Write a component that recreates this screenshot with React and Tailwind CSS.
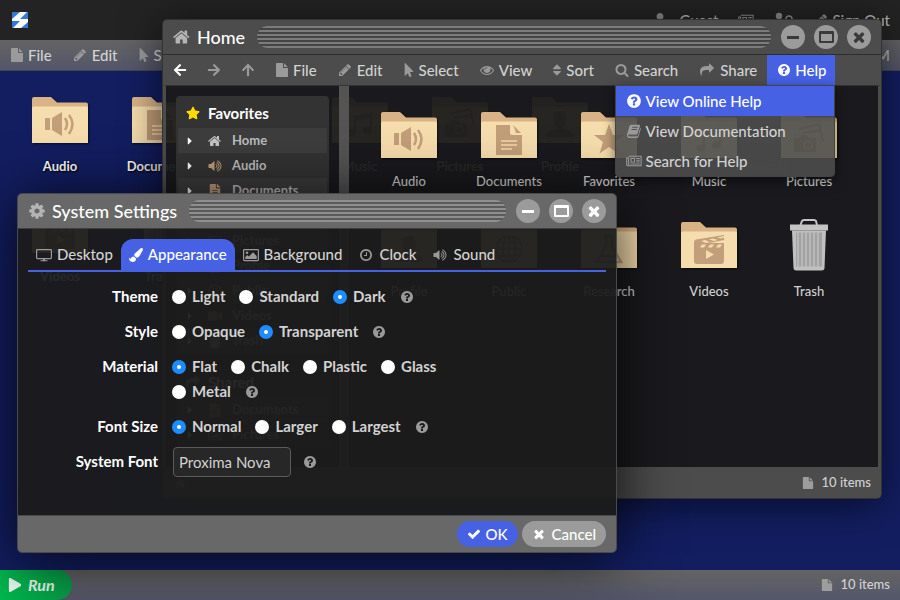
import React from "react";
import {
  FaArrowLeft,
  FaArrowRight,
  FaArrowUp,
  FaCaretRight,
  FaMousePointer,
  FaMusic,
  FaPaintBrush,
  FaPlay,
  FaRegImage,
  FaSort,
  FaStar,
  FaTrash,
  FaUser,
  FaVideo,
  FaBullseye,
  FaFileAlt,
} from "react-icons/fa";

const glyph = (d) =>
  function Glyph({ className }) {
    return (
      <svg viewBox="0 0 1792 1792" fill="currentColor" className={className} aria-hidden="true">
        <path d={d} />
      </svg>
    );
  };

const Home = glyph(
  "M1408 992v480q0 26-19 45t-45 19h-384v-384h-256v384h-384q-26 0-45-19t-19-45v-480q0-1 .5-3t.5-3l575-474 575 474q1 2 1 6zm223-69l-62 74q-8 9-21 11h-3q-13 0-21-7l-692-577-692 577q-12 8-24 7-13-2-21-11l-62-74q-8-10-7-23.5t11-21.5l719-599q32-26 76-26t76 26l244 204v-195q0-14 9-23t23-9h192q14 0 23 9t9 23v408l219 182q10 8 11 21.5t-7 23.5z"
);
const Question = glyph(
  "M1024 1376v-192q0-14-9-23t-23-9h-192q-14 0-23 9t-9 23v192q0 14 9 23t23 9h192q14 0 23-9t9-23zm256-672q0-88-55.5-163t-138.5-116-170-41q-243 0-371 213-15 24 8 42l132 100q7 6 19 6 16 0 25-12 53-68 86-92 34-24 86-24 48 0 85.5 26t37.5 59q0 38-20 61t-68 45q-63 28-115.5 86.5t-52.5 125.5v36q0 14 9 23t23 9h192q14 0 23-9t9-23q0-19 21.5-49.5t54.5-49.5q32-18 49-28.5t46-35 44.5-48 28-60.5 12.5-81zm384 192q0 209-103 385.5t-279.5 279.5-385.5 103-385.5-103-279.5-279.5-103-385.5 103-385.5 279.5-279.5 385.5-103 385.5 103 279.5 279.5 103 385.5z"
);
const Pencil = glyph(
  "M491 1536l91-91-235-235-91 91v107h128v128h107zm523-928q0-22-22-22-10 0-17 7l-542 542q-7 7-7 17 0 22 22 22 10 0 17-7l542-542q7-7 7-17zm-54-192l416 416-832 832h-416v-416zm683 96q0 53-37 90l-166 166-416-416 166-165q36-38 90-38 53 0 91 38l235 234q37 39 37 91z"
);
const File = glyph(
  "M1152 512v-472q22 14 36 28l408 408q14 14 28 36h-472zm-128 32q0 40 28 68t68 28h544v1056q0 40-28 68t-68 28h-1344q-40 0-68-28t-28-68v-1600q0-40 28-68t68-28h800v544z"
);
const Eye = glyph(
  "M1664 960q-152-236-381-353 61 104 61 225 0 185-131.5 316.5t-316.5 131.5-316.5-131.5-131.5-316.5q0-121 61-225-229 117-381 353 133 205 333.5 326.5t434.5 121.5 434.5-121.5 333.5-326.5zm-720-384q0-20-14-34t-34-14q-125 0-214.5 89.5t-89.5 214.5q0 20 14 34t34 14 34-14 14-34q0-86 61-147t147-61q20 0 34-14t14-34zm848 384q0 34-20 69-140 230-376.5 368.5t-499.5 138.5-499.5-139-376.5-368q-20-35-20-69t20-69q140-229 376.5-368t499.5-139 499.5 139 376.5 368q20 35 20 69z"
);
const Cog = glyph(
  "M1152 896q0-106-75-181t-181-75-181 75-75 181 75 181 181 75 181-75 75-181zm512-109v222q0 12-8 23t-20 13l-185 28q-19 54-39 91 35 50 107 138 10 12 10 25t-9 23q-27 37-99 108t-94 71q-12 0-26-9l-138-108q-44 23-91 38-16 136-29 186-7 28-36 28h-222q-14 0-24.5-8.5t-11.5-21.5l-28-184q-49-16-90-37l-141 107q-10 9-25 9-14 0-25-11-126-114-165-168-7-10-7-23 0-12 8-23 15-21 51-66.5t54-70.5q-27-50-41-99l-183-27q-13-2-21-12.5t-8-23.5v-222q0-12 8-23t19-13l186-28q14-46 39-92-40-57-107-138-10-12-10-24 0-10 9-23 26-36 98.5-107.5t94.5-71.5q13 0 26 10l138 107q44-23 91-38 16-136 29-186 7-28 36-28h222q14 0 24.5 8.5t11.5 21.5l28 184q49 16 90 37l142-107q9-9 24-9 13 0 25 10 129 119 165 170 7 8 7 22 0 12-8 23-15 21-51 66.5t-54 70.5q26 50 41 98l183 28q13 2 21 12.5t8 23.5z"
);
const Volume = glyph(
  "M832 352v1088q0 26-19 45t-45 19-45-19l-333-333h-262q-26 0-45-19t-19-45v-384q0-26 19-45t45-19h262l333-333q19-19 45-19t45 19 19 45zm384 544q0 76-42.5 141.5t-112.5 93.5q-10 5-25 5-26 0-45-18.5t-19-45.5q0-21 12-35.5t29-25 34-23 29-36 12-56.5-12-56.5-29-36-34-23-29-25-12-35.5q0-27 19-45.5t45-18.5q15 0 25 5 70 27 112.5 93t42.5 142zm256 0q0 153-85 282.5t-225 188.5q-13 5-25 5-27 0-46-19t-19-45q0-39 39-59 56-29 76-44 74-54 115.5-135.5t41.5-173.5-41.5-173.5-115.5-135.5q-20-15-76-44-39-20-39-59 0-26 19-45t45-19q13 0 26 5 140 59 225 188.5t85 282.5zm256 0q0 230-127 422.5t-338 283.5q-13 5-26 5-26 0-45-19t-19-45q0-36 39-59 7-4 22.5-10.5t22.5-10.5q46-25 82-51 123-91 192-227t69-289-69-289-192-227q-36-26-82-51-7-4-22.5-10.5t-22.5-10.5q-39-23-39-59 0-26 19-45t45-19q13 0 26 5 211 91 338 283.5t127 422.5z"
);
const Times = glyph(
  "M1490 1322q0 40-28 68l-136 136q-28 28-68 28t-68-28l-294-294-294 294q-28 28-68 28t-68-28l-136-136q-28-28-28-68t28-68l294-294-294-294q-28-28-28-68t28-68l136-136q28-28 68-28t68 28l294 294 294-294q28-28 68-28t68 28l136 136q28 28 28 68t-28 68l-294 294 294 294q28 28 28 68z"
);
const Check = glyph(
  "M1671 566q0 40-28 68l-724 724-136 136q-28 28-68 28t-68-28l-136-136-362-362q-28-28-28-68t28-68l136-136q28-28 68-28t68 28l294 295 656-657q28-28 68-28t68 28l136 136q28 28 28 68z"
);
const Search = glyph(
  "M1216 832q0-185-131.5-316.5t-316.5-131.5-316.5 131.5-131.5 316.5 131.5 316.5 316.5 131.5 316.5-131.5 131.5-316.5zm512 832q0 52-38 90t-90 38q-54 0-90-38l-343-342q-179 124-399 124-143 0-273.5-55.5t-225-150-150-225-55.5-273.5 55.5-273.5 150-225 225-150 273.5-55.5 273.5 55.5 225 150 150 225 55.5 273.5q0 220-124 399l343 343q37 37 37 90z"
);
const Share = glyph(
  "M1792 640q0 26-19 45l-512 512q-19 19-45 19t-45-19-19-45v-256h-224q-98 0-175.5 6t-154 21.5-133 42.5-105.5 69.5-80 101-48.5 138.5-17.5 181q0 55 5 123 0 6 2.5 23.5t2.5 26.5q0 15-8.5 25t-23.5 10q-16 0-28-17-7-9-13-22t-13.5-30-10.5-24q-127-285-127-451 0-199 53-333 162-403 875-403h224v-256q0-26 19-45t45-19 45 19l512 512q19 19 19 45z"
);
const Clock = glyph(
  "M1024 544v448q0 14-9 23t-23 9h-320q-14 0-23-9t-9-23v-64q0-14 9-23t23-9h224v-352q0-14 9-23t23-9h64q14 0 23 9t9 23zm416 352q0-148-73-273t-198-198-273-73-273 73-198 198-73 273 73 273 198 198 273 73 273-73 198-198 73-273zm224 0q0 209-103 385.5t-279.5 279.5-385.5 103-385.5-103-279.5-279.5-103-385.5 103-385.5 279.5-279.5 385.5-103 385.5 103 279.5 279.5 103 385.5z"
);

function Newspaper({ className }) {
  return (
    <svg viewBox="0 0 18 14" fill="none" stroke="currentColor" strokeWidth="1.2" className={className} aria-hidden="true">
      <path d="M3 1.6h14v10.8H2.4A1.6 1.6 0 0 1 .8 10.800V3.600H3v7.200a.8.8 0 0 1-1 1.400" />
      <path d="M5.600 4.200h4v4h-4zM11.500 4.200h4M11.500 6.200h4M11.500 8.200h4M5 10.300h10.500" />
    </svg>
  );
}

function Book({ className }) {
  return (
    <svg viewBox="0 0 16 14" className={className} aria-hidden="true">
      <path d="M5 .8h8.300q1 0 .7 1L11.500 9.500q-.3 1-1.300 1H3q-1 0-.9 1t1.100 1h7.600q.8 0 1-.8l2.400-8q.8.6.5 1.500l-2.300 7.600q-.3 1.200-1.500 1.200H2.800Q.6 12.800 1 10.500l2.400-8.200Q3.800.8 5 .8z" fill="currentColor" />
      <path d="M6.200 3.300h5.500M5.500 5.500H11" stroke="#4c4c4c" strokeWidth="0.900" />
    </svg>
  );
}

function People({ className }) {
  return (
    <svg viewBox="0 0 20 16" className={className} aria-hidden="true">
      <circle cx="5" cy="4" r="3.200" fill="currentColor" />
      <path d="M0 15q0-6 5-6t5 6z" fill="currentColor" />
      <circle cx="15" cy="7" r="3" fill="none" stroke="currentColor" strokeWidth="1.500" />
      <path d="M11 15q0-3 4-3t4 3" fill="none" stroke="currentColor" strokeWidth="1.500" />
    </svg>
  );
}

function Monitor({ className }) {
  return (
    <svg viewBox="0 0 16 14" className={className} aria-hidden="true">
      <rect x="0.600" y="1.600" width="14.800" height="9" rx="0.800" fill="none" stroke="currentColor" strokeWidth="1.200" />
      <path d="M7 10.600h2v1.600h2.500v1h-7v-1H7z" fill="currentColor" />
    </svg>
  );
}

function Picture({ className }) {
  return (
    <svg viewBox="0 0 16 14" className={className} aria-hidden="true">
      <rect x="0.600" y="1.600" width="14.800" height="11" rx="0.800" fill="none" stroke="currentColor" strokeWidth="1.200" />
      <circle cx="4" cy="4.800" r="1.300" fill="currentColor" />
      <path d="M2.300 11V9l2-2 1.500 1.500L10 4.300l3.700 3.700v3z" fill="currentColor" />
    </svg>
  );
}

const emblems = {
  Audio: (
    <>
      <path d="M13 21h5v12h-5zM20 21l10-6v24l-10-6z" />
      <path d="M33 21q4 6 0 12M37 18q7 9 0 19" fill="none" stroke="#c39e7a" strokeWidth="2.500" />
    </>
  ),
  Documents: (
    <>
      <path d="M15 13h14v8q0 2 2 2h10v20H15z" />
      <path d="M32 13l8 8h-5q-1-4-3-8z" />
      <path d="M20 29h16M20 33h16M20 37h11" stroke="#f5dcac" strokeWidth="1.500" />
    </>
  ),
  Favorites: <path d="M28 12l4 11h11l-9 7 3.500 11.500L28 35l-9.500 6.500L22 30l-9-7h11z" />,
  Music: (
    <>
      <path d="M22 19l18-4v5l-16 4v12h-2zM38 17h2v16h-2z" />
      <ellipse cx="19.500" cy="36" rx="4.500" ry="3.800" />
      <ellipse cx="35.500" cy="33" rx="4.500" ry="3.800" />
    </>
  ),
  Pictures: (
    <>
      <path d="M18 17l20-5 4 17M22 21l18-3" fill="none" stroke="#c39e7a" strokeWidth="2" />
      <path d="M13 26h5l2-3h6l2 3h7v14H13z" />
      <circle cx="27" cy="33" r="4" fill="none" stroke="#f5dcac" strokeWidth="1.500" />
    </>
  ),
  Profile: <path d="M28 14c9 0 8 14 3 16v2c6 1 11 3 11 8H14c0-5 5-7 11-8v-2c-5-2-6-16 3-16z" />,
  Public: (
    <g fill="none" stroke="#c39e7a" strokeWidth="1.500">
      <circle cx="28" cy="27" r="13" />
      <ellipse cx="28" cy="27" rx="6" ry="13" />
      <path d="M15 27h26M28 14v26M17 20h22M17 34h22" />
    </g>
  ),
  Research: (
    <path d="M23 14h10M25 14v10l-9 16h24l-9-16V14M20 34h16" fill="none" stroke="#c39e7a" strokeWidth="2.500" />
  ),
  Videos: (
    <>
      <path d="M13 20q0-2 2-2.500L43 13v5l-15 3h15v18q0 3-3 3H16q-3 0-3-3z" />
      <path d="M20 19l5 2 4-1-5-2zM28 17.500l5 1.500 4-1-5-1.500zM36 15.500l4 1 3-1v-1.500zM21 22.500h4l-2 3h-4zM29 22.500h4l-2 3h-4zM37 22.500h4l-2 3h-4zM25 28l8 4.500-8 4.500z" fill="#f5dcac" />
    </>
  ),
};

function FolderArt({ name }) {
  return (
    <svg viewBox="0 0 56 46" className="h-[46px] w-14 drop-shadow-[1px_1px_1px_rgba(0,0,0,0.6)]" aria-hidden="true">
      <path d="M0 2q0-2 2-2h17l6 5.500h29q2 0 2 2V20H0z" fill="#d9b386" />
      <path d="M0 11q0-1.500 1.500-1.500h53q1.500 0 1.500 1.500v35H0z" fill="#f6ddad" />
      <g fill="#c39e7a">{emblems[name]}</g>
    </svg>
  );
}

function TrashArt() {
  return (
    <svg viewBox="0 0 38 52" className="h-[52px] w-[38px] shrink-0" aria-hidden="true">
      <path d="M10.500 6l1.500-4q.5-1 2-1h10q1.500 0 2 1l1 4" fill="none" stroke="#c4c4c4" strokeWidth="2" />
      <path d="M0 5.500h38v6H0z" fill="#c4c4c4" />
      <path d="M2 11.500h34L34.500 49q-.2 2.500-3 2.500h-25q-2.800 0-3-2.500z" fill="#c0c0c0" />
      <path d="M6 13.500h26v34H6z" fill="#a2a2a2" />
      <path d="M8 13v35M12 13v35M16 13v35M20 13v35M24 13v35M28 13v35" stroke="#c4c4c4" strokeWidth="1.300" />
    </svg>
  );
}

const folders = ["Audio", "Documents", "Favorites", "Music", "Pictures", "Profile", "Public", "Research", "Videos", "Trash"];

function IconGrid({ labelClass }) {
  return (
    <div className="flex flex-wrap content-start p-2.5">
      {folders.map((name) => (
        <button key={name} type="button" className="flex h-[110px] w-[100px] flex-col items-center gap-3.5 pt-4">
          <span className="flex h-[46px] items-center">
            {name === "Trash" ? <TrashArt /> : <FolderArt name={name} />}
          </span>
          <span className={labelClass}>{name}</span>
        </button>
      ))}
    </div>
  );
}

const menuItems = [
  ["File", File, "w-3.5"],
  ["Edit", Pencil, "w-4"],
  ["Select", FaMousePointer, "w-3"],
  ["View", Eye, "w-4"],
  ["Sort", FaSort, "w-2.5"],
  ["Search", Search, "w-4"],
  ["Share", Share, "w-[18px]"],
];

function MenuButton({ label, Icon, width }) {
  return (
    <button type="button" className="flex h-full items-center gap-1 px-2.5 text-[15px] text-[#d2d2d2]">
      <Icon className={`h-3.5 shrink-0 text-[#9a9a9a] ${width}`} />
      {label}
    </button>
  );
}

function TitleBar({ Icon, title, className, controlText, stripes }) {
  return (
    <header className={`flex h-[35px] shrink-0 items-center border-b border-black/40 px-2.5 ${className}`}>
      <Icon className="size-[18px] shrink-0 text-[#b4b4b4]" />
      <h2 className="mr-3 ml-1.5 text-lg whitespace-nowrap text-white">{title}</h2>
      <div className={`h-[22px] flex-1 rounded-full ${stripes}`} />
      <div className="ml-2.5 flex gap-[9px]">
        <button type="button" aria-label="Minimize" className={`flex size-6 items-center justify-center rounded-full bg-[#9b9b9b] ${controlText}`}>
          <span className="h-[3px] w-3 bg-current" />
        </button>
        <button type="button" aria-label="Maximize" className={`flex size-6 items-center justify-center rounded-full bg-[#9b9b9b] ${controlText}`}>
          <span className="h-3 w-[15px] rounded-[1px] border-2 border-t-[3px] border-current" />
        </button>
        <button type="button" aria-label="Close" className={`flex size-6 items-center justify-center rounded-full bg-[#9b9b9b] ${controlText}`}>
          <Times className="size-4" />
        </button>
      </div>
    </header>
  );
}

const favorites = [
  ["Home", Home, "text-[#c4c4c4]"],
  ["Audio", Volume, "text-[#c39e7a]"],
  ["Documents", FaFileAlt, "text-[#c39e7a]"],
  ["Music", FaMusic, "text-[#c39e7a]"],
  ["Pictures", FaRegImage, "text-[#c39e7a]"],
  ["Profile", FaUser, "text-[#c39e7a]"],
  ["Public", FaBullseye, "text-[#c39e7a]"],
  ["Videos", FaVideo, "text-[#c39e7a]"],
  ["Trash", FaTrash, "text-[#c4c4c4]"],
];
const shared = [
  ["Documents", FaFileAlt, "text-[#c39e7a]"],
  ["Pictures", FaRegImage, "text-[#c39e7a]"],
];

function SideGroup({ title, Icon, iconClass, items }) {
  return (
    <section className="rounded-[4px] bg-[#333] px-0.5 pb-0.5">
      <h3 className="flex h-8 items-center gap-2 px-2 pt-0.5 text-[15px] font-bold text-white">
        <Icon className={`size-3.5 ${iconClass}`} />
        {title}
      </h3>
      <ul>
        {items.map(([name, ItemIcon, color]) => (
          <li key={name} className="odd:bg-[#3d3d3d]">
            <button type="button" className="flex h-[25px] w-full items-center pl-1.5 text-[13px] font-bold text-[#bdbdbd]">
              <FaCaretRight className="mr-3 size-3 text-white" />
              <ItemIcon className={`mr-2.5 size-3.5 ${color}`} />
              {name}
            </button>
          </li>
        ))}
      </ul>
    </section>
  );
}

function ItemCount({ className, children }) {
  return (
    <footer className={`flex shrink-0 items-center gap-2 pr-2.5 text-[13px] text-[#d2d2d2] ${className}`}>
      {children}
      <File className="ml-auto size-3 text-[#9d9d9d]" />
      10 items
    </footer>
  );
}

function HomeWindow() {
  return (
    <section
      aria-label="Home"
      className="absolute top-[19px] left-[162px] flex h-[480px] w-[720px] flex-col rounded-[5px] border border-[#333] shadow-[0_5px_40px_rgba(0,0,0,0.6)]"
    >
      <TitleBar
        Icon={Home}
        title="Home"
        className="rounded-t-[4px] bg-[#4c4c4c]"
        controlText="text-[#3a3a3a]"
        stripes="bg-[repeating-linear-gradient(to_bottom,#7c7c7c_0_2px,#444_2px_4px)]"
      />
      <nav className="flex h-[30px] shrink-0 items-stretch bg-[#4c4c4c]">
        <button type="button" aria-label="Back" className="flex items-center px-2.5 text-white">
          <FaArrowLeft className="size-3.5" />
        </button>
        <button type="button" aria-label="Forward" className="flex items-center px-2.5 text-[#9a9a9a]">
          <FaArrowRight className="size-3.5" />
        </button>
        <button type="button" aria-label="Up" className="flex items-center px-2.5 text-[#9a9a9a]">
          <FaArrowUp className="size-3.5" />
        </button>
        {menuItems.map(([label, Icon, width]) => (
          <MenuButton key={label} label={label} Icon={Icon} width={width} />
        ))}
        <div className="relative">
          <button type="button" aria-expanded="true" className="flex h-full items-center gap-1 bg-[#4661e3] pr-2 pl-2.5 text-[15px] text-white">
            <Question className="size-3.5" />
            Help
          </button>
          <div role="menu" className="absolute top-full right-0 z-10 w-[220px] rounded-b-[4px] border border-[#444] bg-[#4c4c4c]/90 text-[15px] text-[#d2d2d2] shadow-[0_4px_12px_rgba(0,0,0,0.5)]">
            <button role="menuitem" type="button" className="flex h-[30px] w-full items-center gap-1 bg-[#4661e3] pl-2.5 text-white">
              <Question className="size-4" />
              View Online Help
            </button>
            <button role="menuitem" type="button" className="flex h-[30px] w-full items-center gap-1 pl-2.5">
              <Book className="h-3.5 w-4 text-[#9a9a9a]" />
              View Documentation
            </button>
            <button role="menuitem" type="button" className="flex h-[30px] w-full items-center gap-1 pl-2.5">
              <Newspaper className="h-3.5 w-4 text-[#9a9a9a]" />
              Search for Help
            </button>
          </div>
        </div>
      </nav>
      <div className="flex min-h-0 flex-1 border-x-[3px] border-t border-x-[#4c4c4c] border-t-[#333] bg-[#1a1a1a]/95">
        <aside className="flex w-[173px] shrink-0 flex-col gap-2.5 overflow-hidden p-2.5">
          <SideGroup title="Favorites" Icon={FaStar} iconClass="text-[#ffdc00]" items={favorites} />
          <SideGroup title="Shared" Icon={Share} iconClass="text-[#c4c4c4]" items={shared} />
        </aside>
        <div className="flex w-2.5 shrink-0 items-center justify-center bg-[#545454]">
          <span className="h-7 w-1.5 bg-[radial-gradient(#888_1px,transparent_1px)] bg-[length:3px_4px]" />
        </div>
        <div className="min-w-0 flex-1 overflow-hidden">
          <IconGrid labelClass="text-[13px] leading-[18px] text-[#cfcfcf]" />
        </div>
      </div>
      <ItemCount className="h-[31px] rounded-b-[4px] bg-[#4c4c4c] pl-3">
        <Home className="size-3 text-[#9d9d9d]" />
      </ItemCount>
    </section>
  );
}

const tabs = [
  ["Desktop", Monitor],
  ["Appearance", FaPaintBrush],
  ["Background", Picture],
  ["Clock", Clock],
  ["Sound", Volume],
];

const settings = [
  ["Theme", ["Light", "Standard", "Dark"], "Dark"],
  ["Style", ["Opaque", "Transparent"], "Transparent"],
  ["Material", ["Flat", "Chalk", "Plastic", "Glass", "Metal"], "Flat"],
  ["Font Size", ["Normal", "Larger", "Largest"], "Normal"],
];

function HelpTip() {
  return (
    <button type="button" aria-label="Help" className="text-[#9a9a9a]">
      <Question className="size-3.5" />
    </button>
  );
}

function SettingsWindow() {
  return (
    <section
      aria-label="System Settings"
      className="absolute top-[193px] left-[17px] flex h-[360px] w-[600px] flex-col rounded-[5px] border border-[#4a4a4a] shadow-[0_5px_60px_rgba(0,0,0,0.8)]"
    >
      <TitleBar
        Icon={Cog}
        title="System Settings"
        className="rounded-t-[4px] bg-[#686868]"
        controlText="text-white"
        stripes="bg-[repeating-linear-gradient(to_bottom,#8f8f8f_0_2px,#5a5a5a_2px_4px)]"
      />
      <div className="flex-1 bg-[#1b1b1b]/95 p-2.5 text-[15px] text-[#d2d2d2]">
        <div role="tablist" className="flex h-[33px] border-b-2 border-[#4661e3]">
          {tabs.map(([name, Icon]) => (
            <button
              key={name}
              type="button"
              role="tab"
              aria-selected={name === "Appearance"}
              className="flex items-center gap-[5px] rounded-t-xl px-2 aria-selected:bg-[#4661e3] aria-selected:text-white"
            >
              <Icon className={name === "Appearance" ? "size-3.5" : "h-3.5 w-4 text-[#9a9a9a]"} />
              {name}
            </button>
          ))}
        </div>
        <form className="mt-3 flex flex-col gap-2.5 font-bold">
          {settings.map(([name, options, chosen]) => (
            <fieldset key={name} className="flex">
              <legend className="float-left w-[130px] text-right leading-[25px] text-white">{name}</legend>
              <div className="ml-3.5 flex max-w-[300px] flex-wrap items-center gap-x-3.5">
                {options.map((option) => (
                  <label key={option} className="flex h-[25px] items-center gap-1.5">
                    <input
                      type="radio"
                      name={name}
                      defaultChecked={option === chosen}
                      className="size-3.5 appearance-none rounded-full border-[5px] border-white bg-white checked:border-[#1e8cff]"
                    />
                    {option}
                  </label>
                ))}
                <HelpTip />
              </div>
            </fieldset>
          ))}
          <div className="flex h-[25px] items-center">
            <label htmlFor="system-font" className="w-[130px] text-right text-white">
              System Font
            </label>
            <input
              id="system-font"
              defaultValue="Proxima Nova"
              className="mr-3 ml-[15px] h-[30px] w-[118px] rounded-[4px] border border-[#5a5a5a] bg-[#272727] px-[5px] font-normal"
            />
            <HelpTip />
          </div>
        </form>
      </div>
      <footer className="flex h-[37px] items-center justify-end gap-1 rounded-b-[4px] border-t border-[#4a4a4a] bg-[#686868] pr-2.5 text-[15px] text-white">
        <button type="button" className="flex h-[26px] items-center gap-1 rounded-full bg-[#4661e3] px-2.5">
          <Check className="size-3.5" />
          OK
        </button>
        <button type="button" className="flex h-[26px] items-center gap-1.5 rounded-full bg-[#9b9b9b] px-2.5">
          <Times className="size-3.5" />
          Cancel
        </button>
      </footer>
    </section>
  );
}

export default function App() {
  return (
    <div className="relative flex h-screen flex-col overflow-hidden bg-[#131e61] font-[Lato,sans-serif] font-medium">
      <header className="flex h-10 shrink-0 items-center justify-between bg-[#232323] px-2.5 text-[15px] text-[#b4b4b4]">
        <svg viewBox="0 0 16 16" className="ml-0.5 size-4" role="img" aria-label="Logo">
          <path d="M0 0h16v16H0z" fill="#3478d8" />
          <path d="M8 0h7L8 7h8v3L9 16H1l7-7H0V7z" fill="#fff" />
        </svg>
        <div className="flex items-center gap-5">
          <button type="button" className="flex items-center gap-3">
            <FaUser className="size-3.5 text-[#8a8a8a]" />
            Guest
          </button>
          <Newspaper className="h-3.5 w-4 text-[#8a8a8a]" />
          <People className="h-4 w-5 text-[#8a8a8a]" />
          <button type="button" className="flex items-center gap-1">
            <Pencil className="size-3.5 text-[#8a8a8a]" />
            Sign Out
          </button>
        </div>
      </header>
      <nav className="flex h-[31px] shrink-0 items-stretch border-b border-[#46464c] bg-linear-to-b from-[#646464] to-[#54566a]">
        {menuItems.map(([label, Icon, width]) => (
          <MenuButton key={label} label={label} Icon={Icon} width={width} />
        ))}
        <span className="ml-auto self-center pr-2.5 text-[15px] text-[#b4b4b4]">10:30 AM</span>
      </nav>
      <main className="min-h-0 flex-1">
        <IconGrid labelClass="text-[13px] leading-[18px] font-bold text-white [text-shadow:1px_1px_2px_#000]" />
      </main>
      <div className="flex h-[30px] shrink-0 items-stretch bg-linear-to-b from-[#646464] to-[#54566a]">
        <button type="button" className="flex w-[72px] items-center gap-1.5 rounded-r-full bg-linear-to-r from-[#00b84e] to-[#079a47] pl-2 text-base font-bold text-white/90 italic">
          <FaPlay className="size-3.5" />
          Run
        </button>
        <ItemCount className="ml-auto" />
      </div>
      <HomeWindow />
      <SettingsWindow />
    </div>
  );
}
